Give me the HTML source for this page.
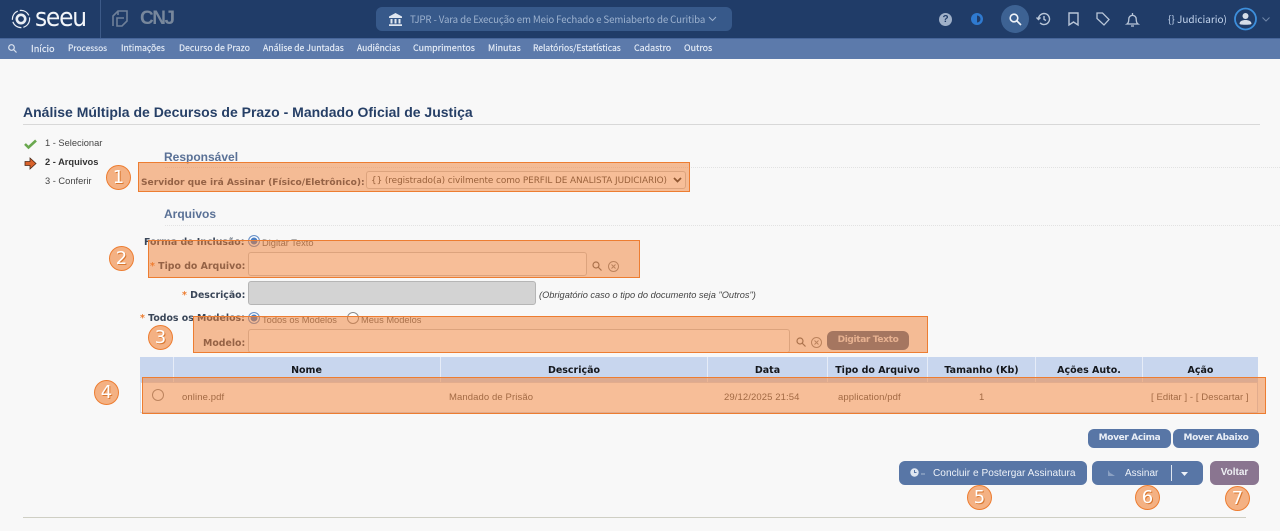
<!DOCTYPE html>
<html lang="pt-BR"><head><meta charset="utf-8"><title>Análise Múltipla</title>
<style>
html,body{margin:0;padding:0;width:1280px;height:531px;overflow:hidden;background:#f8f8f8;font-family:"Liberation Sans",sans-serif}
.a{position:absolute;white-space:nowrap}
.nav{font-family:"Noto Sans CJK JP","Liberation Sans",sans-serif;font-size:8.8px;color:#e6edf7;top:41px;line-height:14px;-webkit-text-stroke:.15px #e6edf7}
.lb{font-family:"DejaVu Sans",sans-serif;font-weight:bold;font-size:9.4px;color:#3a4658;line-height:12px}
.st{color:#ed7d31}
.h2{font-size:12px;font-weight:bold;color:#5a7196;line-height:14px}
.dot{height:0;border-top:1px dotted #e2e2e2}
.inp{box-sizing:border-box;border:1px solid #c9c9c9;border-radius:3px;background:#fff}
.th{font-family:"DejaVu Sans",sans-serif;font-weight:bold;font-size:9.5px;color:#14171c;top:365px;line-height:12px;text-align:center}
.td{font-size:9.5px;color:#555;top:392px;line-height:12px;letter-spacing:.1px}
.sep{top:357px;width:1px;height:25px;background:#e6ecf7}
.btn{box-sizing:border-box;background:#5876a6;border-radius:6px;color:#e9eef6;text-align:center}
.ov{box-sizing:border-box;background:rgba(240,125,50,.5);border:1px solid #ed7d31}
.c{box-sizing:border-box;width:25px;height:25px;border-radius:50%;background:#f4b183;border:1px solid #ed7d31;color:#fff;font:18px/23px "DejaVu Sans",sans-serif;text-align:center;text-shadow:1px 1px 0 #d9772f}
.rad{box-sizing:border-box;width:12px;height:12px;border-radius:50%;border:1px solid #8a8a8a;background:#fff}
.radon{background:#4a7fc4;box-shadow:inset 0 0 0 1.5px #fff;border-color:#6b93c8}
.sm{font-size:9.3px;color:#666;line-height:12px}
svg{position:absolute;overflow:visible}
</style></head><body>

<div class="a" style="left:0;top:0;width:1280px;height:38px;background:#203c68"></div>
<div class="a" style="left:0;top:38px;width:1280px;height:21px;background:#5c7aab;border-top:1px solid #46659a;box-sizing:border-box"></div>
<div class="a" style="left:100px;top:0;width:1px;height:38px;background:#3d5a88"></div>

<svg style="left:11px;top:9px" width="20" height="20" viewBox="0 0 20 20" fill="none"><circle cx="10" cy="10" r="8.6" stroke="#e8edf4" stroke-width="1.2" stroke-dasharray="11 2"/><circle cx="10" cy="10" r="4.2" stroke="#e8edf4" stroke-width="2.6"/></svg>
<div class="a" style="left:35px;top:5px;font:26px/26px 'DejaVu Sans',sans-serif;color:#f2f5f9;letter-spacing:-1.4px;transform-origin:0 0;transform:scale(.9,1)">seeu</div>
<svg style="left:112px;top:10px" width="17" height="17" viewBox="0 0 17 17" fill="none" stroke="#6f8099" stroke-width="1.6"><path d="M1 16V6l5-5h9v10l-5 5H5V8h7M6 1v4"/></svg>
<div class="a" style="left:140px;top:9px;font:bold 19px/20px 'Liberation Sans',sans-serif;color:#77879c;letter-spacing:-1.5px">CNJ</div>

<div class="a" style="left:376px;top:7px;width:356px;height:24px;background:#37598a;border-radius:6px"></div>
<svg style="left:389px;top:13px" width="13" height="13" viewBox="0 0 13 13" fill="#dfe6f0"><path d="M6.5 0 13 3.5V5H0V3.500zM1.500 6h2v4.500h-2zM5.500 6h2v4.500h-2zM9.500 6h2v4.500h-2zM0 11.300h13V13H0z"/></svg>
<div class="a" style="left:410px;top:12px;font:9.7px/14px 'Noto Sans CJK JP','Liberation Sans',sans-serif;color:#9db2cf;letter-spacing:-.12px">TJPR - Vara de Execução em Meio Fechado e Semiaberto de Curitiba</div>
<svg style="left:708px;top:16px" width="9" height="6" viewBox="0 0 9 6" fill="none" stroke="#9db2cf"><path d="M1 1l3.500 3.500L8 1"/></svg>

<div class="a" style="left:939px;top:13px;width:13px;height:13px;border-radius:50%;background:#9fb0c8;color:#203c68;font:bold 10px/13px 'Liberation Sans',sans-serif;text-align:center">?</div>
<svg style="left:970px;top:12px" width="14" height="14" viewBox="0 0 14 14"><circle cx="7" cy="7" r="6" fill="#2f7ad0"/><path d="M7 3.500a3.500 3.500 0 0 1 0 7z" fill="#203c68"/></svg>
<div class="a" style="left:1001px;top:5px;width:28px;height:28px;border-radius:50%;background:#3d6293"></div>
<svg style="left:1009px;top:13px" width="13" height="13" viewBox="0 0 13 13" fill="none" stroke="#f0f4f9" stroke-width="1.600"><circle cx="5" cy="5" r="3.800"/><path d="M8 8l4 4"/></svg>
<svg style="left:1036px;top:12px" width="15" height="14" viewBox="0 0 15 14" fill="none" stroke="#b9c6d8" stroke-width="1.400"><path d="M2.500 7a5.500 5.500 0 1 1 1.600 3.900M0.500 5.500 2.500 7.500 4.500 5.500M8 4v3.300l2 1.200"/></svg>
<svg style="left:1068px;top:12px" width="11" height="14" viewBox="0 0 11 14" fill="none" stroke="#b9c6d8" stroke-width="1.400"><path d="M1 1h9v12L5.500 10 1 13z"/></svg>
<svg style="left:1096px;top:12px" width="14" height="14" viewBox="0 0 14 14" fill="none" stroke="#b9c6d8" stroke-width="1.300"><path d="M1 1h5.500L13 7.500 8 13 1 6.500z"/></svg>
<svg style="left:1126px;top:12px" width="13" height="15" viewBox="0 0 13 15" fill="none" stroke="#b9c6d8" stroke-width="1.300"><path d="M1 12h11c-1.500-1-1.800-2.500-1.800-5a3.700 3.700 0 0 0-7.400 0c0 2.500-.3 4-1.800 5zM5 14h3M6.500 1v2"/></svg>
<div class="a" style="left:1168px;top:11px;font:10px/15px 'Noto Sans CJK JP','Liberation Sans',sans-serif;color:#c5d6ee">{} Judiciario)</div>
<svg style="left:1234px;top:7px" width="24" height="24" viewBox="0 0 24 24"><circle cx="11.500" cy="12" r="10.500" fill="none" stroke="#3d8fdc" stroke-width="1.800"/><circle cx="11.500" cy="9" r="3" fill="#d5dde8"/><path d="M5.500 17c0-3 3-4 6-4s6 1 6 4c-1.500 1-10.500 1-12 0z" fill="#d5dde8"/></svg>
<svg style="left:1262px;top:17px" width="8" height="5" viewBox="0 0 8 5" fill="none" stroke="#6f86a8"><path d="M.5.500 4 4 7.500.500"/></svg>

<svg style="left:8px;top:44px" width="9" height="9" viewBox="0 0 9 9" fill="none" stroke="#dbe3ef" stroke-width="1.200"><circle cx="3.500" cy="3.500" r="2.800"/><path d="M5.500 5.500 8.500 8.500"/></svg>
<div class="a nav" style="left:31px;font-size:9.2px">Início</div>
<div class="a nav" style="left:68px;font-size:8.4px">Processos</div>
<div class="a nav" style="left:121px;font-size:8.5px">Intimações</div>
<div class="a nav" style="left:179px">Decurso de Prazo</div>
<div class="a nav" style="left:263px;font-size:8.7px">Análise de Juntadas</div>
<div class="a nav" style="left:357px;font-size:8.5px">Audiências</div>
<div class="a nav" style="left:413px;font-size:8.9px">Cumprimentos</div>
<div class="a nav" style="left:488px;font-size:8.9px">Minutas</div>
<div class="a nav" style="left:533px;font-size:8.5px">Relatórios/Estatísticas</div>
<div class="a nav" style="left:634px;font-size:8.9px">Cadastro</div>
<div class="a nav" style="left:684px;font-size:8.9px">Outros</div>

<div class="a" style="left:23px;top:104px;font:bold 14px/17px 'Liberation Sans',sans-serif;color:#263f66">Análise Múltipla de Decursos de Prazo - Mandado Oficial de Justiça</div>
<div class="a" style="left:23px;top:124px;width:1237px;height:1px;background:#d8d8d8"></div>

<svg style="left:24px;top:139px" width="13" height="10" viewBox="0 0 13 10" fill="none" stroke="#6aa84f" stroke-width="2.600"><path d="M1 5l3.500 3.500L12 1.500"/></svg>
<div class="a" style="left:45px;top:137px;font-size:9.300px;line-height:12px;color:#444">1 - Selecionar</div>
<svg style="left:25px;top:158px" width="11" height="11" viewBox="0 0 11 11"><path d="M0 3.500h5V0l6 5.500L5 11V7.500H0z" fill="#d9622b" stroke="#4a2a1a" stroke-width=".8"/></svg>
<div class="a" style="left:45px;top:156px;font:bold 9.300px/12px 'Liberation Sans',sans-serif;color:#333">2 - Arquivos</div>
<div class="a" style="left:45px;top:175px;font-size:9.300px;line-height:12px;color:#444">3 - Conferir</div>

<div class="a h2" style="left:164px;top:150px">Responsável</div>
<div class="a dot" style="left:165px;top:167px;width:1115px"></div>
<div class="a lb" style="left:141px;top:177px;font-size:9.100px">Servidor que irá Assinar (Físico/Eletrônico):</div>
<div class="a inp" style="left:366px;top:171px;width:320px;height:18px"></div>
<div class="a" style="left:371px;top:175px;font:8.900px/12px 'DejaVu Sans',sans-serif;color:#444;letter-spacing:-.07px">{} (registrado(a) civilmente como PERFIL DE ANALISTA JUDICIARIO)</div>
<svg style="left:673px;top:177px" width="9" height="6" viewBox="0 0 9 6" fill="none" stroke="#333" stroke-width="1.800"><path d="M1 1l3.500 3.500L8 1"/></svg>

<div class="a h2" style="left:164px;top:207px">Arquivos</div>
<div class="a dot" style="left:165px;top:225px;width:1115px"></div>

<div class="a lb" style="left:144px;top:237px">Forma de Inclusão:</div>
<div class="a rad radon" style="left:248px;top:235px"></div>
<div class="a sm" style="left:262px;top:237px">Digitar Texto</div>

<div class="a lb" style="left:150px;top:261px"><span class="st">*</span>&nbsp;Tipo do Arquivo:</div>
<div class="a inp" style="left:248px;top:252px;width:339px;height:24px"></div>
<svg style="left:592px;top:261px" width="10" height="10" viewBox="0 0 10 10" fill="none" stroke="#666" stroke-width="1.200"><circle cx="4" cy="4" r="3"/><path d="M6 6l3.500 3.500"/></svg>
<svg style="left:608px;top:261px" width="11" height="11" viewBox="0 0 11 11" fill="none" stroke="#888"><circle cx="5.500" cy="5.500" r="5"/><path d="M3.500 3.500l4 4M7.500 3.500l-4 4"/></svg>

<div class="a lb" style="left:182px;top:290px"><span class="st">*</span>&nbsp;Descrição:</div>
<div class="a inp" style="left:248px;top:281px;width:288px;height:24px;background:#d3d3d3;border-color:#b5b5b5"></div>
<div class="a" style="left:539px;top:289px;font:italic 9.250px/12px 'Liberation Sans',sans-serif;color:#444">(Obrigatório caso o tipo do documento seja "Outros")</div>

<div class="a lb" style="left:140px;top:313px"><span class="st">*</span>&nbsp;Todos os Modelos:</div>
<div class="a rad radon" style="left:248px;top:312px"></div>
<div class="a sm" style="left:262px;top:314px">Todos os Modelos</div>
<div class="a rad" style="left:347px;top:312px"></div>
<div class="a sm" style="left:361px;top:314px">Meus Modelos</div>

<div class="a lb" style="left:203px;top:338px">Modelo:</div>
<div class="a inp" style="left:248px;top:329px;width:542px;height:24px"></div>
<svg style="left:796px;top:337px" width="10" height="10" viewBox="0 0 10 10" fill="none" stroke="#666" stroke-width="1.200"><circle cx="4" cy="4" r="3"/><path d="M6 6l3.500 3.500"/></svg>
<svg style="left:811px;top:337px" width="11" height="11" viewBox="0 0 11 11" fill="none" stroke="#888"><circle cx="5.500" cy="5.500" r="5"/><path d="M3.500 3.500l4 4M7.500 3.500l-4 4"/></svg>
<div class="a btn" style="left:827px;top:331px;width:82px;height:19px;background:#5b6f8f;font:bold 9px/18px 'DejaVu Sans',sans-serif;letter-spacing:-.35px;color:#dfe5ee">Digitar Texto</div>

<div class="a" style="left:140px;top:357px;width:1118px;height:25px;background:#c8d6ee"></div>
<div class="a" style="left:140px;top:382px;width:1118px;height:31px;background:#fff;border:1px solid #d5dbe8;box-sizing:border-box"></div>
<div class="a sep" style="left:173px"></div><div class="a sep" style="left:440px"></div><div class="a sep" style="left:707px"></div><div class="a sep" style="left:827px"></div><div class="a sep" style="left:927px"></div><div class="a sep" style="left:1035px"></div><div class="a sep" style="left:1142px"></div>
<div class="a th" style="left:173px;width:267px">Nome</div>
<div class="a th" style="left:441px;width:266px">Descrição</div>
<div class="a th" style="left:708px;width:119px">Data</div>
<div class="a th" style="left:828px;width:99px">Tipo do Arquivo</div>
<div class="a th" style="left:928px;width:107px">Tamanho (Kb)</div>
<div class="a th" style="left:1036px;width:106px">Ações Auto.</div>
<div class="a th" style="left:1143px;width:115px">Ação</div>
<div class="a rad" style="left:152px;top:389px"></div>
<div class="a td" style="left:182px">online.pdf</div>
<div class="a td" style="left:449px">Mandado de Prisão</div>
<div class="a td" style="left:724px">29/12/2025 21:54</div>
<div class="a td" style="left:838px">application/pdf</div>
<div class="a td" style="left:979px">1</div>
<div class="a td" style="left:1151px;letter-spacing:.08px">[ Editar ] - [ Descartar ]</div>

<div class="a btn" style="left:1088px;top:429px;width:83px;height:19px;font:bold 9px/18px 'DejaVu Sans',sans-serif;letter-spacing:-.35px">Mover Acima</div>
<div class="a btn" style="left:1173px;top:429px;width:86px;height:19px;font:bold 9px/18px 'DejaVu Sans',sans-serif;letter-spacing:-.35px">Mover Abaixo</div>

<div class="a btn" style="left:899px;top:461px;width:188px;height:24px"></div>
<svg style="left:910px;top:468px" width="16" height="9" viewBox="0 0 16 9"><circle cx="4.500" cy="4.500" r="4.200" fill="#dfe6f0"/><path d="M4.500 2v2.500h2" stroke="#5876a6" fill="none"/><path d="M11 6h4" stroke="#a9b9d2"/></svg>
<div class="a" style="left:933px;top:467px;font:10.100px/13px 'Liberation Sans',sans-serif;color:#eef2f8;letter-spacing:.02px">Concluir e Postergar Assinatura</div>
<div class="a btn" style="left:1092px;top:461px;width:111px;height:24px"></div>
<svg style="left:1107px;top:469px" width="9" height="8" viewBox="0 0 9 8" fill="#8ba1c3"><path d="M1 7V1l2 3 2 1 3 2z"/></svg>
<div class="a" style="left:1125px;top:467px;font:10px/13px 'Liberation Sans',sans-serif;color:#eef2f8">Assinar</div>
<div class="a" style="left:1171px;top:465px;width:1px;height:16px;background:#dfe6f0"></div>
<svg style="left:1181px;top:472px" width="7" height="4" viewBox="0 0 7 4" fill="#eef2f8"><path d="M0 0h7L3.500 4z"/></svg>
<div class="a btn" style="left:1210px;top:461px;width:49px;height:24px;background:#8a7590;font:bold 10px/24px 'Liberation Sans',sans-serif;color:#eef0f4">Voltar</div>

<div class="a" style="left:23px;top:517px;width:1223px;height:1px;background:#cfcfc4"></div>

<div class="a ov" style="left:138px;top:162px;width:552px;height:30px"></div>
<div class="a ov" style="left:148px;top:240px;width:492px;height:38px"></div>
<div class="a ov" style="left:193px;top:316px;width:735px;height:37px"></div>
<div class="a ov" style="left:142px;top:377px;width:1124px;height:37px"></div>

<div class="a c" style="left:106px;top:165px">1</div>
<div class="a c" style="left:109px;top:246px">2</div>
<div class="a c" style="left:148px;top:325px">3</div>
<div class="a c" style="left:94px;top:380px">4</div>
<div class="a c" style="left:967px;top:485px">5</div>
<div class="a c" style="left:1135px;top:485px">6</div>
<div class="a c" style="left:1225px;top:486px">7</div>
</body></html>
